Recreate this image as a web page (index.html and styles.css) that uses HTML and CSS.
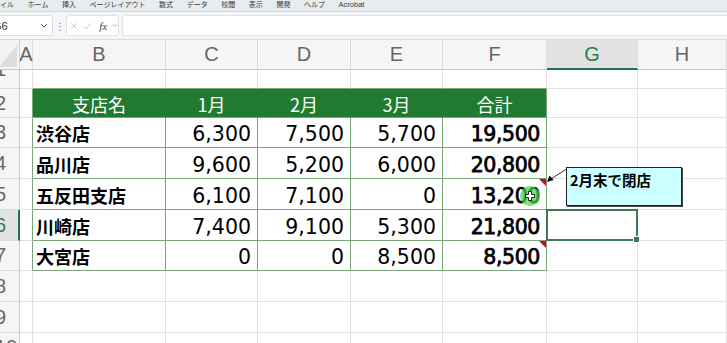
FILE: index.html
```html
<!DOCTYPE html>
<html lang="ja">
<head>
<meta charset="utf-8">
<title>Excel</title>
<link rel="stylesheet" href="styles.css">
</head>
<body>
<div class="menubar">
  <span>イル</span><span>ホーム</span><span>挿入</span><span>ページレイアウト</span><span>数式</span><span>データ</span><span>校閲</span><span>表示</span><span>開発</span><span>ヘルプ</span><span class="latin">Acrobat</span>
</div>
<div class="formulabar">
  <div class="namebox">
    <span class="ref">G6</span>
    <svg class="chev" width="8" height="5" viewBox="0 0 8 5"><path d="M1 1l3 3 3-3" fill="none" stroke="#555" stroke-width="1"/></svg>
  </div>
  <span class="vdots">⋮</span>
  <div class="fxbox">
    <svg width="10" height="10" viewBox="0 0 10 10"><path d="M1.5 1.5l7 7M8.5 1.5l-7 7" stroke="#bdbdbd" stroke-width="1" fill="none"/></svg>
    <svg width="11" height="10" viewBox="0 0 11 10"><path d="M1 5.5l3 3 6-7" stroke="#bdbdbd" stroke-width="1" fill="none"/></svg>
    <span class="fx">fx</span>
    <svg width="7" height="5" viewBox="0 0 7 5"><path d="M1 1l2.5 2.5L6 1" fill="none" stroke="#999" stroke-width="1"/></svg>
  </div>
  <div class="input"></div>
</div>

<div class="sheet">
  <div class="grid">
    <!-- column headers -->
    <div class="corner"><span class="tri"></span></div>
    <div class="ch">A</div><div class="ch">B</div><div class="ch">C</div><div class="ch">D</div><div class="ch">E</div><div class="ch">F</div><div class="ch on">G</div><div class="ch">H</div>

    <!-- row 1 -->
    <div class="rh r1"><span>1</span></div>
    <div class="c"></div><div class="c tt"></div><div class="c tt"></div><div class="c tt"></div><div class="c tt"></div><div class="c tt"></div><div class="c"></div><div class="c"></div>

    <!-- row 2 -->
    <div class="rh"><span>2</span></div>
    <div class="c tl"></div>
    <div class="th">支店名</div><div class="th">1月</div><div class="th">2月</div><div class="th">3月</div><div class="th last">合計</div>
    <div class="c"></div><div class="c"></div>

    <!-- row 3 -->
    <div class="rh"><span>3</span></div>
    <div class="c tl"></div>
    <div class="td name">渋谷店</div><div class="td num">6,300</div><div class="td num">7,500</div><div class="td num">5,700</div><div class="td num sum">19,500</div>
    <div class="c"></div><div class="c"></div>

    <!-- row 4 -->
    <div class="rh"><span>4</span></div>
    <div class="c tl"></div>
    <div class="td name">品川店</div><div class="td num">9,600</div><div class="td num">5,200</div><div class="td num">6,000</div><div class="td num sum">20,800</div>
    <div class="c"></div><div class="c"></div>

    <!-- row 5 -->
    <div class="rh"><span>5</span></div>
    <div class="c tl"></div>
    <div class="td name">五反田支店</div><div class="td num">6,100</div><div class="td num">7,100</div><div class="td num">0</div><div class="td num sum note">13,200</div>
    <div class="c"></div><div class="c"></div>

    <!-- row 6 -->
    <div class="rh on"><span>6</span></div>
    <div class="c tl"></div>
    <div class="td name">川崎店</div><div class="td num">7,400</div><div class="td num">9,100</div><div class="td num">5,300</div><div class="td num sum">21,800</div>
    <div class="c sel"></div><div class="c"></div>

    <!-- row 7 -->
    <div class="rh"><span>7</span></div>
    <div class="c tl"></div>
    <div class="td name">大宮店</div><div class="td num">0</div><div class="td num">0</div><div class="td num">8,500</div><div class="td num sum note">8,500</div>
    <div class="c"></div><div class="c"></div>

    <!-- row 8 -->
    <div class="rh"><span>8</span></div>
    <div class="c"></div><div class="c"></div><div class="c"></div><div class="c"></div><div class="c"></div><div class="c"></div><div class="c"></div><div class="c"></div>

    <!-- row 9 -->
    <div class="rh"><span>9</span></div>
    <div class="c"></div><div class="c"></div><div class="c"></div><div class="c"></div><div class="c"></div><div class="c"></div><div class="c"></div><div class="c"></div>

    <!-- row 10 -->
    <div class="rh"><span>10</span></div>
    <div class="c"></div><div class="c"></div><div class="c"></div><div class="c"></div><div class="c"></div><div class="c"></div><div class="c"></div><div class="c"></div>
  </div>

  <!-- comment callout -->
  <svg class="arrow" width="24" height="16" viewBox="0 0 24 16">
    <path d="M23 1L6 12" stroke="#333" stroke-width="1" fill="none"/>
    <path d="M2 15L4.5 8.5 8.5 13z" fill="#000"/>
  </svg>
  <div class="comment">2月末で閉店</div>

  <!-- mouse highlight -->
  <svg class="cursor" width="22" height="22" viewBox="0 0 22 22">
    <circle cx="11" cy="11" r="10" fill="rgba(70,215,70,0.72)"/>
    <path d="M9.5 6.5h3v3h3v3h-3v3h-3v-3h-3v-3h3z" fill="#fff" stroke="#111" stroke-width="0.9"/>
  </svg>
</div>
</body>
</html>
```
FILE: styles.css
```css
* { box-sizing: border-box; margin: 0; padding: 0; }

body {
  margin: 0;
  width: 727px;
  height: 343px;
  overflow: hidden;
  background: #ffffff;
  font-family: "Noto Sans CJK JP", "Liberation Sans", sans-serif;
}

/* ribbon tabs strip (cut at the top) */
.menubar {
  height: 12px;
  background: #e7ecf0;
  border-bottom: 1px solid #d3d8dc;
  display: flex;
  gap: 13.6px;
  font-size: 7px;
  line-height: 9px;
  color: #3a3a3a;
  white-space: nowrap;
  overflow: hidden;
}
.menubar .latin { font-family: "Liberation Sans", sans-serif; font-size: 7.5px; }

/* formula bar */
.formulabar {
  height: 28px;
  display: flex;
  align-items: flex-start;
  padding-top: 3px;
  background: #f4f6f8;
  border-bottom: 1px solid #dadada;
}
.namebox {
  width: 53px;
  height: 21px;
  background: #fff;
  border: 1px solid #dedede;
  border-left: none;
  border-radius: 0 3px 3px 0;
  display: flex;
  align-items: center;
  justify-content: space-between;
  padding-right: 4px;
  overflow: hidden;
}
.namebox .ref {
  font-family: "Liberation Sans", sans-serif;
  font-size: 11px;
  color: #333;
  margin-left: -7px;
}
.vdots {
  width: 13px;
  text-align: center;
  font-size: 10px;
  line-height: 21px;
  color: #777;
}
.fxbox {
  width: 53px;
  height: 21px;
  background: #fff;
  border: 1px solid #e2e2e2;
  border-radius: 3px;
  display: flex;
  align-items: center;
  gap: 5px;
  padding-left: 3px;
}
.fx {
  font-family: "Liberation Serif", serif;
  font-style: italic;
  font-size: 11px;
  color: #444;
  margin-left: 2px;
}
.input {
  flex: 1;
  height: 21px;
  margin-left: 3px;
  background: #fff;
  border: 1px solid #e2e2e2;
  border-right: none;
  border-radius: 3px 0 0 3px;
}

/* sheet */
.sheet {
  position: relative;
  height: 303px;
  overflow: hidden;
}
.grid {
  display: grid;
  grid-template-columns: 20px 13px 133px 92px 93px 92px 104px 91px 89px;
  grid-template-rows: 30px 19px 29px 30px 31px 31px 31px 30px 31px 31px 30px;
}

.corner {
  position: relative;
  background: #f3f3f3;
  border-right: 1px solid #d0d0d0;
  border-bottom: 1px solid #c9c9c9;
}
.corner .tri {
  position: absolute;
  right: 2px;
  bottom: 2px;
  width: 0;
  height: 0;
  border-left: 18px solid transparent;
  border-bottom: 22px solid #dcdcdc;
}

.ch {
  background: #f5f5f5;
  border-right: 1px solid #dcdcdc;
  border-bottom: 1px solid #c9c9c9;
  display: flex;
  align-items: center;
  justify-content: center;
  font-family: "Liberation Sans", sans-serif;
  font-size: 20px;
  color: #666;
  overflow: visible;
  white-space: nowrap;
}
.ch.on {
  background: #e2e2e2;
  color: #2e7d4f;
  border-bottom: 2px solid #217346;
}

.rh {
  background: #f5f5f5;
  border-right: 1px solid #c9c9c9;
  border-bottom: 1px solid #dcdcdc;
  display: flex;
  align-items: center;
  font-family: "Liberation Sans", sans-serif;
  font-size: 20px;
  color: #666;
  overflow: hidden;
  white-space: nowrap;
}
.rh span { margin-left: -5px; }
.rh.r1 { align-items: flex-start; }
.rh.r1 span { margin-top: -12px; }
.rh.on {
  background: #e2e2e2;
  color: #2e7d4f;
  border-right: 2px solid #217346;
}

.c {
  border-right: 1px solid #e1e1e1;
  border-bottom: 1px solid #e1e1e1;
}
.c.tt { border-bottom-color: #7aa67c; }
.c.tl { border-right-color: #7aa67c; }

/* table header */
.th {
  background: #207a30;
  border-right: 1px solid #207a30;
  border-bottom: 1px solid #7aa67c;
  color: #fff;
  font-size: 18px;
  display: flex;
  align-items: center;
  justify-content: center;
  padding-top: 1px;
}
.th.last { border-right-color: #7aa67c; }

/* table data */
.td {
  position: relative;
  border-right: 1px solid #7aa67c;
  border-bottom: 1px solid #7aa67c;
  display: flex;
  align-items: center;
  color: #000;
  white-space: nowrap;
}
.td.name {
  font-size: 18px;
  font-weight: 700;
  padding-left: 3px;
  padding-top: 1px;
}
.td.num {
  justify-content: flex-end;
  padding-right: 6px;
  padding-top: 3px;
  font-family: "DejaVu Sans", "Liberation Sans", sans-serif;
  font-size: 20.5px;
}
.td.sum {
  -webkit-text-stroke: 0.75px #000;
  letter-spacing: -0.4px;
}
.td.note::after {
  content: "";
  position: absolute;
  top: 0;
  right: 0;
  width: 0;
  height: 0;
  border-left: 7px solid transparent;
  border-top: 7px solid #e4001b;
}

/* selected cell G6 */
.c.sel { position: relative; }
.c.sel::after {
  content: "";
  position: absolute;
  top: -1px;
  left: -1px;
  right: -1px;
  bottom: -1px;
  border: 2px solid #3c7a55;
}
.c.sel::before {
  content: "";
  position: absolute;
  right: -3px;
  bottom: -3px;
  width: 5px;
  height: 5px;
  background: #3c7a55;
  border: 1px solid #fff;
  z-index: 2;
}

/* comment callout */
.comment {
  position: absolute;
  left: 566px;
  top: 127px;
  width: 116px;
  height: 39px;
  background: #ccffff;
  border: 1px solid #222;
  box-shadow: 1px 1px 0 #444;
  font-size: 14.5px;
  font-weight: 700;
  line-height: 18px;
  padding: 3px 0 0 3px;
  color: #000;
}
.arrow {
  position: absolute;
  left: 545px;
  top: 127px;
}

/* mouse pointer highlight */
.cursor {
  position: absolute;
  left: 519px;
  top: 145px;
}
```
